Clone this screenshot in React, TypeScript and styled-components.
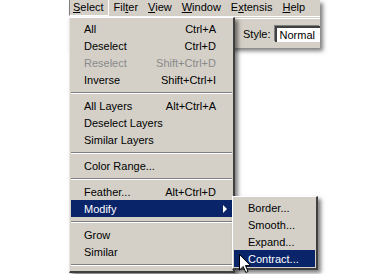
import React from 'react';
import styled, { createGlobalStyle } from 'styled-components';

const GlobalStyle = createGlobalStyle`
  html, body { margin: 0; padding: 0; background: #fff; }
  body { font-family: "Liberation Sans", Arial, sans-serif; font-size: 11px; }
`;

type Entry =
  | { kind: 'item'; label: string; shortcut?: string; disabled?: boolean; active?: boolean; sub?: boolean }
  | { kind: 'sep' };

const selectMenu: Entry[] = [
  { kind: 'item', label: 'All', shortcut: 'Ctrl+A' },
  { kind: 'item', label: 'Deselect', shortcut: 'Ctrl+D' },
  { kind: 'item', label: 'Reselect', shortcut: 'Shift+Ctrl+D', disabled: true },
  { kind: 'item', label: 'Inverse', shortcut: 'Shift+Ctrl+I' },
  { kind: 'sep' },
  { kind: 'item', label: 'All Layers', shortcut: 'Alt+Ctrl+A' },
  { kind: 'item', label: 'Deselect Layers' },
  { kind: 'item', label: 'Similar Layers' },
  { kind: 'sep' },
  { kind: 'item', label: 'Color Range...' },
  { kind: 'sep' },
  { kind: 'item', label: 'Feather...', shortcut: 'Alt+Ctrl+D' },
  { kind: 'item', label: 'Modify', active: true, sub: true },
  { kind: 'sep' },
  { kind: 'item', label: 'Grow' },
  { kind: 'item', label: 'Similar' },
  { kind: 'sep' },
];

const modifyMenu = ['Border...', 'Smooth...', 'Expand...', 'Contract...'];

const menuTitles: { text: string; key: number }[] = [
  { text: 'Select', key: 0 },
  { text: 'Filter', key: 3 },
  { text: 'View', key: 0 },
  { text: 'Window', key: 0 },
  { text: 'Extensis', key: 1 },
  { text: 'Help', key: 0 },
];

const Page = styled.div`
  position: relative;
  width: 390px;
  height: 274px;
  overflow: hidden;
  background: #fff;
  color: #000;
`;

const AppWindow = styled.div`
  margin-left: 69px;
  width: 251px;
  background: #d4d0c8;
  box-shadow: 3px 3px 4px rgba(0, 0, 0, 0.5);
`;

const MenuBar = styled.div`
  display: flex;
  height: 16px;
  border-bottom: 1px solid #fff;
`;

const MenuTitle = styled.div<{ $open?: boolean }>`
  height: 15px;
  line-height: 15px;
  padding: 0 4px 0 ${(p) => (p.$open ? '3px' : '4px')};
  margin-right: 1px;
  border-left: ${(p) => (p.$open ? '1px solid #808080' : 'none')};
  border-right: ${(p) => (p.$open ? '1px solid #fff' : '1px solid transparent')};
  border-bottom: ${(p) => (p.$open ? '1px solid #fff' : '1px solid transparent')};
  white-space: nowrap;
`;

const Key = styled.span`
  text-decoration: underline;
`;

const Toolbar = styled.div`
  display: flex;
  align-items: center;
  height: 29px;
  margin-top: 1px;
  padding-left: 174px;
  border-top: 1px solid #fff;
  gap: 4px;
`;

const Field = styled.div`
  flex: 1;
  height: 12px;
  line-height: 12px;
  padding: 1px 3px;
  background: #fff;
  border-top: 2px solid #404040;
  border-left: 2px solid #404040;
  box-shadow: -1px -1px 0 #808080;
`;

const Dropdown = styled.div`
  position: absolute;
  left: 69px;
  top: 17px;
  width: 161px;
  padding: 2px 1px;
  background: #d4d0c8;
  border-left: 1px solid #e8e6e1;
  border-top: 1px solid #fff;
  border-right: 2px solid #404040;
  border-bottom: 2px solid #404040;
  box-shadow: 3px 3px 4px rgba(0, 0, 0, 0.5);
`;

const Row = styled.div<{ $active?: boolean; $disabled?: boolean }>`
  display: flex;
  align-items: center;
  height: 17px;
  padding: 0 16px 0 13px;
  position: relative;
  white-space: nowrap;
  background: ${(p) => (p.$active ? '#0a246a' : 'transparent')};
  color: ${(p) => (p.$active ? '#fff' : p.$disabled ? '#8a8a8a' : '#000')};
`;

const Label = styled.span`
  flex: 1;
`;

const Shortcut = styled.span`
  text-align: right;
`;

const Separator = styled.div`
  height: 9px;
  display: flex;
  flex-direction: column;
  justify-content: center;
  &::before {
    content: '';
    display: block;
    height: 1px;
    background: #808080;
  }
  &::after {
    content: '';
    display: block;
    height: 1px;
    background: #fff;
  }
`;

const Arrow = styled.span`
  position: absolute;
  right: 5px;
  top: 5px;
  width: 0;
  height: 0;
  border-top: 4px solid transparent;
  border-bottom: 4px solid transparent;
  border-left: 4px solid #fff;
`;

const Submenu = styled.div`
  position: absolute;
  left: 232px;
  top: 196px;
  width: 81px;
  padding: 2px 1px 1px;
  background: #d4d0c8;
  border-left: 1px solid #fff;
  border-top: 1px solid #fff;
  border-right: 2px solid #404040;
  border-bottom: 2px solid #404040;
  box-shadow: 3px 3px 4px rgba(0, 0, 0, 0.5);
`;

const SubRow = styled(Row)`
  padding-left: 14px;
`;

const Cursor = styled.svg`
  position: absolute;
  left: 239px;
  top: 254px;
`;

const Title = ({ text, k, open }: { text: string; k: number; open?: boolean }) => (
  <MenuTitle $open={open}>
    {text.slice(0, k)}
    <Key>{text[k]}</Key>
    {text.slice(k + 1)}
  </MenuTitle>
);

export default function App() {
  return (
    <Page>
      <GlobalStyle />
      <AppWindow>
        <MenuBar>
          {menuTitles.map((t, i) => (
            <Title key={t.text} text={t.text} k={t.key} open={i === 0} />
          ))}
        </MenuBar>
        <Toolbar>
          <span>Style:</span>
          <Field>Normal</Field>
        </Toolbar>
      </AppWindow>

      <Dropdown>
        {selectMenu.map((e, i) =>
          e.kind === 'sep' ? (
            <Separator key={i} />
          ) : (
            <Row key={i} $active={e.active} $disabled={e.disabled}>
              <Label>{e.label}</Label>
              {e.shortcut && <Shortcut>{e.shortcut}</Shortcut>}
              {e.sub && <Arrow />}
            </Row>
          ),
        )}
      </Dropdown>

      <Submenu>
        {modifyMenu.map((label, i) => (
          <SubRow key={label} $active={i === modifyMenu.length - 1}>
            <Label>{label}</Label>
          </SubRow>
        ))}
      </Submenu>

      <Cursor width="13" height="20" viewBox="0 0 13 20">
        <path d="M0.5 0.5 L0.5 16 L4.2 12.5 L6.8 18.5 L9 17.5 L6.5 11.6 L11.5 11.6 Z" fill="#fff" stroke="#000" strokeWidth="1" />
      </Cursor>
    </Page>
  );
}
